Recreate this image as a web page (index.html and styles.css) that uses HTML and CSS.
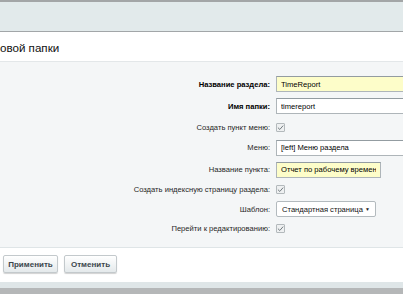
FILE: index.html
```html
<!DOCTYPE html>
<html lang="ru">
<head>
<meta charset="utf-8">
<link rel="stylesheet" href="styles.css">
</head>
<body>
<div class="page">
  <div class="topbar"></div>
  <div class="header"><span class="title">овой папки</span></div>
  <div class="form">
    <div class="row h22">
      <label class="lbl bold">Название раздела:</label>
      <div class="ctl"><input class="inp yellow wide" type="text" value="TimeReport"></div>
    </div>
    <div class="row h22">
      <label class="lbl bold">Имя папки:</label>
      <div class="ctl"><input class="inp wide" type="text" value="timereport"></div>
    </div>
    <div class="row h20">
      <label class="lbl">Создать пункт меню:</label>
      <div class="ctl"><span class="cb"><svg viewBox="0 0 10 10" width="7" height="7"><path d="M1.3 5.2 L4 7.8 L8.8 2.3" fill="none" stroke="#6f787c" stroke-width="1.4"/></svg></span></div>
    </div>
    <div class="row h21">
      <label class="lbl">Меню:</label>
      <div class="ctl"><input class="inp wide" type="text" value="[left] Меню раздела"></div>
    </div>
    <div class="row h23">
      <label class="lbl">Название пункта:</label>
      <div class="ctl"><input class="inp yellow short" type="text" value="Отчет по рабочему времени"></div>
    </div>
    <div class="row h16">
      <label class="lbl">Создать индексную страницу раздела:</label>
      <div class="ctl"><span class="cb"><svg viewBox="0 0 10 10" width="7" height="7"><path d="M1.3 5.2 L4 7.8 L8.8 2.3" fill="none" stroke="#6f787c" stroke-width="1.4"/></svg></span></div>
    </div>
    <div class="row h24">
      <label class="lbl">Шаблон:</label>
      <div class="ctl"><div class="sel"><span>Стандартная страница</span><span class="arrow">▼</span></div></div>
    </div>
    <div class="row h14">
      <label class="lbl">Перейти к редактированию:</label>
      <div class="ctl"><span class="cb"><svg viewBox="0 0 10 10" width="7" height="7"><path d="M1.3 5.2 L4 7.8 L8.8 2.3" fill="none" stroke="#6f787c" stroke-width="1.4"/></svg></span></div>
    </div>
  </div>
  <div class="footer">
    <button class="btn b1" type="button">Применить</button>
    <button class="btn b2" type="button">Отменить</button>
  </div>
  <div class="bottom1"></div>
  <div class="bottom2"></div>
</div>
</body>
</html>
```
FILE: styles.css
```css
html, body {
  margin: 0;
  padding: 0;
  background: #ffffff;
}
body {
  font-family: "Liberation Sans", Arial, sans-serif;
  font-size: 7.6px;
  color: #000;
}
.page {
  width: 403px;
  height: 294px;
  overflow: hidden;
  display: flex;
  flex-direction: column;
}
.topbar {
  height: 29px;
  border-top: 2px solid #a3a6a7;
  border-bottom: 1px solid #a2a6a8;
  background: #e2eaeb;
  flex: none;
}
.header {
  height: 29px;
  border-bottom: 1px solid #e3e7e9;
  background: #fff;
  display: flex;
  align-items: center;
  flex: none;
}
.title {
  font-size: 11.6px;
  color: #111;
  margin-top: 1px;
}
.form {
  background: #f4f6f7;
  padding: 11px 0 12px 0;
  border-bottom: 1px solid #dfe5e7;
  flex: none;
  overflow: hidden;
}
.row {
  display: flex;
  align-items: center;
  gap: 6px;
}
.h14 { height: 14px; }
.h16 { height: 16px; }
.h20 { height: 20px; }
.h21 { height: 21px; }
.h22 { height: 22px; }
.h23 { height: 23px; }
.h24 { height: 24px; }
.lbl {
  width: 270px;
  flex: none;
  text-align: right;
  color: #262626;
  white-space: nowrap;
}
.bold {
  font-weight: bold;
  color: #000;
}
.ctl {
  flex: 1;
  display: flex;
  align-items: center;
  min-width: 0;
}
.inp {
  box-sizing: border-box;
  height: 16px;
  border: 1px solid #aeb5b9;
  border-top-color: #939ca1;
  background: #fff;
  padding: 0 4px;
  font-family: "Liberation Sans", Arial, sans-serif;
  font-size: 7.6px;
  color: #000;
  margin: 0;
  outline: none;
  flex: none;
}
.yellow {
  background: #fdfdc9;
}
.wide { width: 180px; }
.short { width: 105px; }
.cb {
  box-sizing: border-box;
  width: 9px;
  height: 9px;
  border: 1px solid #b3b9bc;
  background: #eef0f1;
  display: flex;
  align-items: center;
  justify-content: center;
  border-radius: 1px;
}
.sel {
  box-sizing: border-box;
  width: 100px;
  height: 16px;
  border: 1px solid #b3babe;
  border-radius: 2px;
  background: #fff;
  display: flex;
  align-items: center;
  justify-content: space-between;
  padding: 0 5px 0 5px;
  color: #111;
  white-space: nowrap;
}
.arrow {
  font-size: 5px;
  color: #222;
}
.footer {
  height: 34px;
  background: #fff;
  display: flex;
  align-items: flex-start;
  gap: 6px;
  padding: 7px 0 0 3px;
  box-sizing: border-box;
  flex: none;
}
.btn {
  box-sizing: border-box;
  height: 18px;
  border: 1px solid #c3c9cc;
  border-radius: 2px;
  background: linear-gradient(#ffffff, #e4e9eb);
  box-shadow: 0 1px 1px rgba(0,0,0,0.18);
  font-family: "Liberation Sans", Arial, sans-serif;
  font-size: 8px;
  font-weight: bold;
  color: #3b464c;
  padding: 0;
  margin: 0;
}
.b1 { width: 55px; }
.b2 { width: 53px; }
.bottom1 {
  height: 6px;
  background: #dfe6e8;
  flex: none;
}
.bottom2 {
  flex: 1;
  background: #b5b7b8;
}
```
